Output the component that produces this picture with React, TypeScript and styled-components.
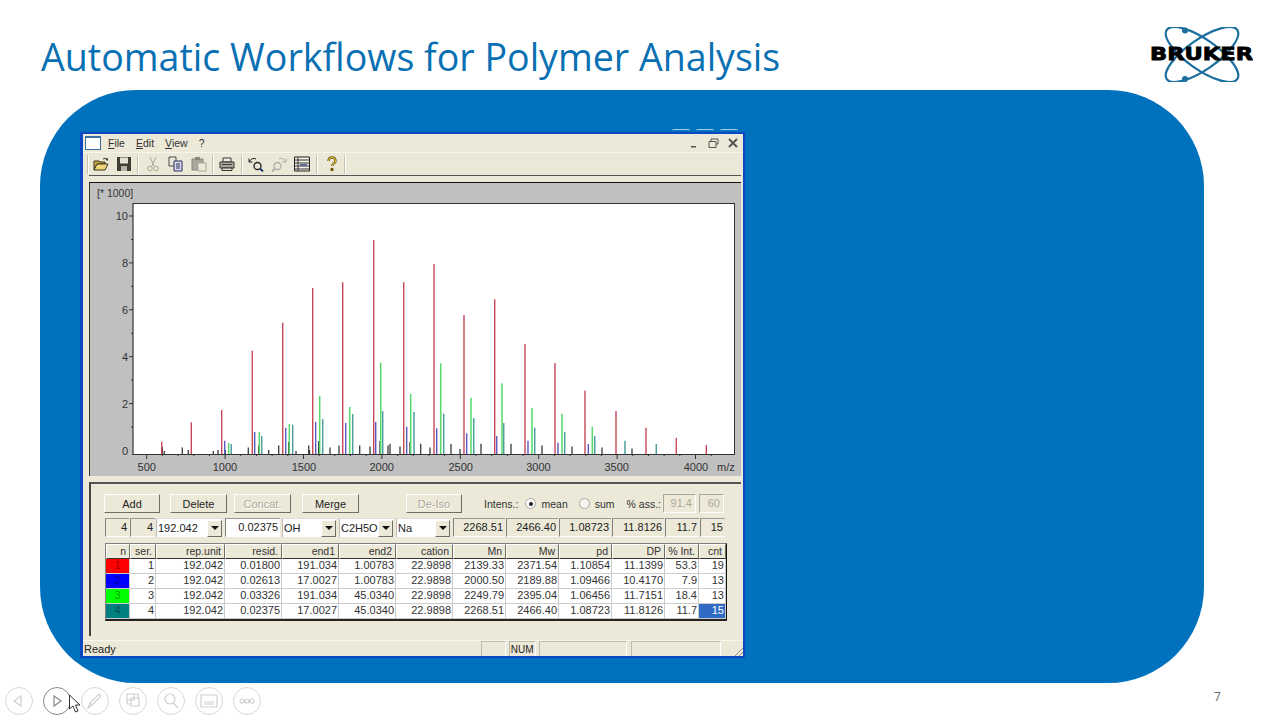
import React from "react";
import styled, { createGlobalStyle } from "styled-components";

const Global = createGlobalStyle`
  html, body { margin: 0; padding: 0; background: #fff; }
  #root { width: 1280px; height: 720px; overflow: hidden; }
`;

const Slide = styled.div`
  width: 1280px; height: 720px; display: flex; flex-direction: column;
  position: relative; background: #fff; font-family: "Liberation Sans", Arial, sans-serif;
`;
const Header = styled.header`
  height: 90px; box-sizing: border-box; padding: 27px 27px 0 41px;
  display: flex; justify-content: space-between; align-items: flex-start;
`;
const Title = styled.h1`
  margin: 0; font: 400 37.6px/60px "Open Sans", sans-serif; color: #0a70b4; white-space: nowrap;
`;
const Panel = styled.main`
  width: 1164px; height: 593px; margin-left: 40px; box-sizing: border-box;
  padding: 42px 0 0 40px; background: #0071bc; border-radius: 96px;
`;
const Win = styled.section`
  position: relative; width: 665px; height: 526px; box-sizing: border-box;
  border: 2px solid #0a48c4; border-left-width: 3px; background: #ece9d8;
  display: flex; flex-direction: column; font-size: 11px; color: #222;
`;
const GhostButtons = styled.div`
  position: absolute; top: -5px; right: 5px; display: flex; gap: 6px;
`;
const GhostButton = styled.span`
  width: 18px; height: 3px; border-top: 1px solid #a8cbe6; border-radius: 2px 2px 0 0;
`;
const MenuBar = styled.div`
  height: 19px; flex: none; display: flex; align-items: center; padding: 0 3px 0 2px;
  border-bottom: 1px solid #f8f6ec; box-sizing: border-box;
`;
const DocIcon = styled.span`
  width: 14px; height: 11px; background: #fff; border: 1px solid #3a6ea5; border-top-width: 2px;
  margin-right: 7px; flex: none;
`;
const MenuItem = styled.span`
  margin-right: 11px; font-size: 10.5px; color: #333;
  &::first-letter { text-decoration: underline; }
`;
const MdiButtons = styled.div`
  margin-left: auto; display: flex; gap: 4px; align-items: center;
`;
const MdiButton = styled.span`
  width: 15px; height: 15px; display: flex; align-items: center; justify-content: center;
`;
const Toolbar = styled.div`
  height: 22px; flex: none; display: flex; align-items: center; padding-left: 4px;
  box-sizing: border-box; position: relative; background: #ebe8d7;
`;
const ToolIcon = styled.span<{ $gap: number }>`
  width: 16px; height: 16px; flex: none; margin-right: ${p => p.$gap}px; display: block;
  svg { display: block; }
`;
const ToolSep = styled.span<{ $mr: number }>`
  width: 1px; height: 19px; background: #c4c1b0; border-right: 1px solid #fff; flex: none; margin-right: ${p => p.$mr}px;
`;
const Rule = styled.div`
  height: 1px; flex: none; margin: 0 2px 0 6px; background: #555;
`;
const ChartPane = styled.div`
  height: 294px; flex: none; margin: 6px 2px 0 6px; box-sizing: border-box; background: #c0c0c0;
  border-top: 1px solid #111; border-left: 1px solid #333; svg { display: block; }
`;
const LowerPane = styled.div`
  height: 154px; flex: none; margin: 6px 2px 0 6px; box-sizing: border-box;
  border-top: 2px solid #555; border-left: 2px solid #444; padding: 10px 0 0 13px;
`;
const ButtonRow = styled.div`
  height: 19px; display: flex; align-items: center;
`;
const Btn = styled.span<{ $w: number; $mr: number; $off?: boolean }>`
  width: ${p => p.$w}px; margin-right: ${p => p.$mr}px; height: 19px; box-sizing: border-box; flex: none;
  display: flex; align-items: center; justify-content: center; font-size: 11px;
  color: ${p => (p.$off ? "#aca899" : "#222")};
  text-shadow: ${p => (p.$off ? "1px 1px 0 #fff" : "none")};
  border: 1px solid; border-color: #fff #716f64 #716f64 #fff;
`;
const Label = styled.span<{ $mr?: number }>`
  margin-right: ${p => p.$mr ?? 0}px; flex: none; font-size: 10.5px; color: #333; white-space: nowrap;
`;
const Radio = styled.span<{ $on?: boolean }>`
  width: 11px; height: 11px; border-radius: 50%; background: ${p => (p.$on ? "#fff" : "#f6f5ee")};
  border: 1px solid #a9a89e; box-sizing: border-box; margin-right: 5px; flex: none; position: relative;
  &::after {
    content: ""; display: ${p => (p.$on ? "block" : "none")}; position: absolute;
    left: 2.5px; top: 2.5px; width: 4px; height: 4px; border-radius: 50%; background: #222;
  }
`;
const OffField = styled.span<{ $w: number; $mr?: number }>`
  width: ${p => p.$w}px; margin-right: ${p => p.$mr ?? 0}px; height: 19px; box-sizing: border-box; flex: none;
  border: 1px solid; border-color: #aca899 #fff #fff #aca899; color: #aca899; text-align: right;
  padding-right: 3px; line-height: 17px;
`;
const ParamRow = styled.div`
  height: 19px; margin: 5px 0 6px 1px; display: flex;
`;
const Field = styled.span<{ $w: number; $mr?: number; $white?: boolean }>`
  width: ${p => p.$w}px; margin-right: ${p => p.$mr ?? 1}px; height: 19px; box-sizing: border-box; flex: none;
  background: ${p => (p.$white ? "#fff" : "transparent")};
  border-left: 1px solid #808080; border-top: 1px solid #9a9a90; border-bottom: 1px solid #fff;
  text-align: right; padding-right: 2px; line-height: 17px; font-size: 11px;
`;
const Combo = styled.span<{ $w: number; $mr?: number }>`
  width: ${p => p.$w}px; margin-right: ${p => p.$mr ?? 3}px; height: 19px; box-sizing: border-box; flex: none;
  background: #fff; display: flex; align-items: center; justify-content: space-between;
  padding-left: 1px; border-left: 1px solid #bbb; border-top: 1px solid #ddd;
  font-size: 11px; white-space: nowrap; overflow: hidden;
`;
const ComboArrow = styled.span`
  width: 15px; height: 17px; flex: none; box-sizing: border-box; background: #ece9d8;
  border: 1px solid; border-color: #fff #716f64 #716f64 #fff;
  display: flex; align-items: center; justify-content: center;
  &::after {
    content: ""; border-left: 4px solid transparent; border-right: 4px solid transparent; border-top: 4px solid #111;
  }
`;
const COLS = "24px 26px 69px 57px 57px 57px 57px 53px 53px 53px 53px 34px 27px";
const Table = styled.div`
  width: 622px; margin-left: 1px; box-sizing: border-box; display: grid; grid-template-columns: ${COLS};
  border: 1px solid; border-color: #808080 #111 #222 #808080; border-bottom-width: 2px; background: #fff;
`;
const HeadCell = styled.span`
  height: 15px; box-sizing: border-box; background: #ece9d8; text-align: right; padding-right: 3px;
  line-height: 12px; font-size: 10.5px; color: #333; border-bottom: 1px solid #333;
  border-right: 1px solid #716f64; border-left: 1px solid #fff; border-top: 1px solid #fff;
`;
const Cell = styled.span<{ $sel?: boolean }>`
  height: 15px; box-sizing: border-box; text-align: right; padding-right: 1px; line-height: 13px;
  font-size: 11px; color: ${p => (p.$sel ? "#fff" : "#333")}; background: ${p => (p.$sel ? "#316ac5" : "#fff")};
  border-right: 1px solid #ccc; border-bottom: 1px solid #ccc;
`;
const KeyCell = styled.span<{ $c: string }>`
  height: 15px; box-sizing: border-box; text-align: center; line-height: 13px; font-size: 11px;
  color: rgba(0, 0, 0, 0.42); background: ${p => p.$c}; border-bottom: 1px solid #ccc; border-right: 1px solid #ccc;
`;
const StatusBar = styled.footer`
  height: 16px; flex: none; margin-top: 4px; display: flex; align-items: center; position: relative;
  padding-left: 1px; font-size: 11px; color: #222; border-top: 1px solid #f8f6ec; box-sizing: border-box;
`;
const StatusPanel = styled.span<{ $w: number; $ml: number }>`
  width: ${p => p.$w}px; margin-left: ${p => p.$ml}px; height: 15px; box-sizing: border-box; flex: none;
  border-left: 1px solid #bdbaa8; border-top: 1px solid #bdbaa8; border-right: 1px solid #fff;
  font-size: 10px; line-height: 15px; padding-left: 1px;
`;
const Grip = styled.span`
  position: absolute; right: 0; bottom: 0; width: 10px; height: 10px;
  background: repeating-linear-gradient(135deg, transparent 0 2px, #8f8d80 2px 3px);
  clip-path: polygon(100% 0, 100% 100%, 0 100%);
`;
const Foot = styled.div`
  height: 37px; display: flex; align-items: flex-start; padding: 4px 0 0 5px; box-sizing: border-box; gap: 10px;
`;
const NavBtn = styled.span<{ $dark?: boolean }>`
  width: 28px; height: 28px; flex: none; box-sizing: border-box; border-radius: 50%;
  border: 1px solid ${p => (p.$dark ? "#8a8a8a" : "#d8d8d8")};
  display: flex; align-items: center; justify-content: center; background: #fff;
`;
const PageNo = styled.span`
  position: absolute; left: 1214px; top: 688px; font: 12px "Open Sans", sans-serif; color: #666;
`;
const Cursor = styled.svg`
  position: absolute; left: 68px; top: 694px;
`;

const red: number[][] = [[161.7,441.7],[191.3,422.3],[221.7,410],[252.3,350.7],[282.7,322.7],[312.7,288],[342.7,282.3],[373.7,240],[403.7,282.3],[434,264],[464,315],[494.7,299.3],[525,344],[555,363],[585,390.7],[616,411],[646,427.7],[676.3,438],[706.3,445]];
const green: number[][] = [[228.7,443],[259.3,432],[289.3,424],[319.7,396],[349.7,407],[380.7,362.7],[410.7,394],[440.7,363.3],[471,397.7],[502,383.3],[532,408],[562,413.7],[592.3,426.7]];
const teal: number[][] = [[231.3,444],[261.7,436],[292.7,424.7],[322.7,419],[352.7,414],[382.7,411],[414,412],[443.7,413.7],[473.7,418],[503.7,423],[534.7,427.7],[564.7,432],[594.7,436],[625,440.7],[656.3,444]];
const blue: number[][] = [[224.7,440.7],[254.7,432],[285.7,427.7],[315.7,422],[345.7,423],[375.7,422],[406.7,426.7],[436.7,428.3],[466.7,433.3],[496.7,436],[528,440.7],[558,442.7],[588.3,444]];
const black: number[][] = [[162.3,447],[164.3,451],[182.3,447.5],[188.3,450],[213.3,451],[218,450],[225.3,450],[248.3,447.5],[258.7,445.5],[268.7,450],[278.7,445.5],[288.7,442],[296,451],[308.7,445.5],[309.5,450],[318.7,441],[330,447.5],[339,445.5],[359.7,445.5],[370,446.5],[380,441],[388,445.5],[390,443.7],[400,446.5],[410,442],[420.7,443.7],[430,447.5],[451,444],[460,449],[481,443.7],[511,443.7],[542,445.5],[572,446.5],[602,447.5],[632,448.5]];
const series: { pts: number[][]; color: string; w: number }[] = [
  { pts: black, color: "#3a3a3a", w: 1.3 },
  { pts: teal, color: "#4f9ea0", w: 1.5 },
  { pts: green, color: "#55d868", w: 1.5 },
  { pts: blue, color: "#5a5ac4", w: 1.4 },
  { pts: red, color: "#c84858", w: 1.4 },
];
const X0 = 90, Y0 = 183;
const xLabels: [string, number][] = [["500",146.7],["1000",225],["1500",304],["2000",381.7],["2500",460.7],["3000",538.5],["3500",616.7],["4000",696]];
const yLabels: [string, number][] = [["10",216],["8",263],["6",310],["4",357],["2",404],["0",450.5]];

const Chart = () => {
  const minor = Array.from({ length: 37 }, (_, i) => 146.7 + i * 15.68);
  const yt = Array.from({ length: 10 }, (_, i) => 216 + i * 23.45);
  return (
    <svg width="650" height="293" viewBox={`${X0} ${Y0} 650 293`}>
      <rect x="133" y="203" width="602" height="251" fill="#fff" />
      <path d="M133 203.5H735M734.5 203V454" stroke="#333" strokeWidth="1" fill="none" />
      <path d="M133 203V455M132 454.5H735" stroke="#333" strokeWidth="1.2" fill="none" />
      {series.map(s => s.pts.map(([x, y], i) => (
        <line key={s.color + i} x1={x} x2={x} y1={y} y2={454} stroke={s.color} strokeWidth={s.w} />
      )))}
      {minor.map((x, i) => (
        <line key={i} x1={x} x2={x} y1={454} y2={i % 5 === 0 ? 459 : 456} stroke="#333" strokeWidth="1" />
      ))}
      {yt.map((y, i) => (
        <line key={i} x1={i % 2 === 0 ? 129 : 131} x2={133} y1={y} y2={y} stroke="#333" strokeWidth="1" />
      ))}
      <g fontFamily="'Liberation Sans', Arial, sans-serif" fontSize="11" fill="#333">
        <text x="97" y="197" fontSize="10.5">[* 1000]</text>
        {xLabels.map(([t, x]) => <text key={t} x={x} y="471" textAnchor="middle">{t}</text>)}
        <text x="717" y="471">m/z</text>
        {yLabels.map(([t, y]) => <text key={t} x="128" y={y + 4} textAnchor="end">{t}</text>)}
      </g>
    </svg>
  );
};

const Logo = () => (
  <svg width="103" height="55" viewBox="0 0 103 55">
    <g fill="none" stroke="#1c6f9f" strokeWidth="2.2">
      <ellipse cx="52" cy="27.5" rx="43" ry="15" transform="rotate(35 52 27.5)" />
      <ellipse cx="52" cy="27.5" rx="43" ry="15" transform="rotate(-35 52 27.5)" />
    </g>
    <circle cx="35" cy="3.5" r="3" fill="#1c6f9f" />
    <circle cx="35" cy="52" r="3" fill="#1c6f9f" />
    <text x="0" y="33" fontFamily="'DejaVu Sans', sans-serif" fontWeight="700" fontSize="17"
      textLength="103" lengthAdjust="spacingAndGlyphs" fill="#000" stroke="#000" strokeWidth="0.8">BRUKER</text>
  </svg>
);

const I = ({ children }: { children: React.ReactNode }) => (
  <svg width="16" height="16" viewBox="0 0 16 16">{children}</svg>
);
const icons = {
  open: <I><path d="M1 5h5l1 1h5v2H4L1 14z" fill="#c8a83c" stroke="#3a3520" /><path d="M1 14l3-6h11l-3 6z" fill="#f0d878" stroke="#3a3520" /><path d="M10 3q3-2 5 1M15 4l-2-.2 1.6-1.6" fill="none" stroke="#333" /></I>,
  save: <I><path d="M1 1h14v14H1z" fill="#3e3e32" /><path d="M4 1.5h8v6H4z" fill="#e4e2d4" /><path d="M5 10h6v5H5z" fill="#b6b4a4" /></I>,
  cut: <I><path d="M5 1l4 9M11 1L7 10" stroke="#a9a79a" fill="none" /><circle cx="5" cy="12.5" r="2.3" fill="none" stroke="#a9a79a" /><circle cx="11" cy="12.5" r="2.3" fill="none" stroke="#a9a79a" /></I>,
  copy: <I><path d="M1 1h7v9H1z" fill="#e8e6da" stroke="#4a4a40" /><path d="M6 5h8v10H6z" fill="#d8dcea" stroke="#2c2c60" /><path d="M8 8h4M8 10h4M8 12h4" stroke="#2c2c60" /></I>,
  paste: <I><path d="M1 3h11v11H1z" fill="#a9a79a" stroke="#8b897c" /><path d="M4 1h5v3H4z" fill="#8b897c" /><path d="M7 7h8v8H7z" fill="#ecead9" stroke="#a9a79a" /></I>,
  print: <I><path d="M4 2h8v4H4z" fill="#f2f0e4" stroke="#333" /><path d="M1 6h14v6H1z" fill="#a8a698" stroke="#333" /><path d="M3 12h10v2.500H3z" fill="#e4e2d4" stroke="#333" /><path d="M3 8.500h10" stroke="#444" /></I>,
  undo: <I><circle cx="9.500" cy="10" r="3.500" fill="none" stroke="#222" strokeWidth="1.3" /><path d="M12 12.500l3 3" stroke="#1a3a6a" strokeWidth="2" /><path d="M1 6q3-5 7-3M1 2.500V6h3.500" fill="none" stroke="#222" /></I>,
  redo: <I><circle cx="6.500" cy="10" r="3.500" fill="none" stroke="#b0aea2" strokeWidth="1.3" /><path d="M4 12.500l-3 3" stroke="#b0aea2" strokeWidth="2" /><path d="M15 6q-3-5-7-3M15 2.500V6h-3.500" fill="none" stroke="#b0aea2" /></I>,
  list: <I><path d="M0.500 1h15v14H.5z" fill="#f4f2e8" stroke="#222" /><path d="M1 4h14M1 7h14M1 10h14M1 13h14M4 1v14" stroke="#333" /><path d="M6 8h7v2H6z" fill="#5a6a9a" /></I>,
  help: <I><path d="M4.500 5q0-3.500 3.500-3.500t3.500 3.500q0 2-2.200 3-1 .6-1 2" fill="none" stroke="#6a5a10" strokeWidth="2.400" /><path d="M4.500 5q0-3.500 3.500-3.500t3.500 3.500q0 2-2.200 3-1 .6-1 2" fill="none" stroke="#f0d040" strokeWidth="1" /><circle cx="8" cy="13.500" r="1.700" fill="#6a5a10" /></I>,
};

const header = ["n","ser.","rep.unit","resid.","end1","end2","cation","Mn","Mw","pd","DP","% Int.","cnt"];
const rows: { c: string; v: string[] }[] = [
  { c: "#ff0000", v: ["1","1","192.042","0.01800","191.034","1.00783","22.9898","2139.33","2371.54","1.10854","11.1399","53.3","19"] },
  { c: "#0000ff", v: ["2","2","192.042","0.02613","17.0027","1.00783","22.9898","2000.50","2189.88","1.09466","10.4170","7.9","13"] },
  { c: "#00ff00", v: ["3","3","192.042","0.03326","191.034","45.0340","22.9898","2249.79","2395.04","1.06456","11.7151","18.4","13"] },
  { c: "#008080", v: ["4","4","192.042","0.02375","17.0027","45.0340","22.9898","2268.51","2466.40","1.08723","11.8126","11.7","15"] },
];

const nav = [
  <path d="M15 8l-7 5 7 5z" />,
  <path d="M10 8l7 5-7 5z" />,
  <path d="M6 20l2-5 9-9 2 2-9 9zM8 15l2 2" />,
  <path d="M7 6h7v6H7zM11 10h8v8h-8zM7 12v4h4M14 6h4v4" />,
  <path d="M17 11a5 5 0 1 0-10 0a5 5 0 1 0 10 0M15 15l5 5" />,
  <path d="M5 7h16v12H5zM8 14h10M8 16h10" />,
  <path d="M6 13a2 2 0 1 0 4 0a2 2 0 1 0-4 0M11 13a2 2 0 1 0 4 0a2 2 0 1 0-4 0M16 13a2 2 0 1 0 4 0a2 2 0 1 0-4 0" />,
];

export default function App() {
  return (
    <Slide>
      <Global />
      <Header>
        <Title>Automatic Workflows for Polymer Analysis</Title>
        <Logo />
      </Header>
      <Panel>
        <Win>
          <GhostButtons><GhostButton /><GhostButton /><GhostButton /></GhostButtons>
          <MenuBar>
            <DocIcon />
            <MenuItem>File</MenuItem>
            <MenuItem>Edit</MenuItem>
            <MenuItem>View</MenuItem>
            <MenuItem>?</MenuItem>
            <MdiButtons>
              <MdiButton><svg width="9" height="9" viewBox="0 0 9 9"><path d="M1 7h5v1.500H1z" fill="#555" /></svg></MdiButton>
              <MdiButton><svg width="11" height="11" viewBox="0 0 11 11"><path d="M3 3V1h7v5H8M1 3.500h7v6H1z" fill="none" stroke="#555" /></svg></MdiButton>
              <MdiButton><svg width="10" height="10" viewBox="0 0 10 10"><path d="M1 1l8 8M9 1L1 9" stroke="#555" strokeWidth="2" /></svg></MdiButton>
            </MdiButtons>
          </MenuBar>
          <Toolbar>
            <ToolSep $mr={4} />
            <ToolIcon $gap={7}>{icons.open}</ToolIcon>
            <ToolIcon $gap={5}>{icons.save}</ToolIcon>
            <ToolSep $mr={6} />
            <ToolIcon $gap={7}>{icons.cut}</ToolIcon>
            <ToolIcon $gap={7}>{icons.copy}</ToolIcon>
            <ToolIcon $gap={5}>{icons.paste}</ToolIcon>
            <ToolSep $mr={5} />
            <ToolIcon $gap={6}>{icons.print}</ToolIcon>
            <ToolSep $mr={5} />
            <ToolIcon $gap={7}>{icons.undo}</ToolIcon>
            <ToolIcon $gap={7}>{icons.redo}</ToolIcon>
            <ToolIcon $gap={6}>{icons.list}</ToolIcon>
            <ToolSep $mr={6} />
            <ToolIcon $gap={4}>{icons.help}</ToolIcon>
            <ToolSep $mr={0} />
          </Toolbar>
          <Rule />
          <ChartPane><Chart /></ChartPane>
          <LowerPane>
            <ButtonRow>
              <Btn $w={56} $mr={10}>Add</Btn>
              <Btn $w={57} $mr={7}>Delete</Btn>
              <Btn $w={57} $mr={11} $off>Concat.</Btn>
              <Btn $w={57} $mr={47}>Merge</Btn>
              <Btn $w={56} $mr={22} $off>De-Iso</Btn>
              <Label $mr={7}>Intens.:</Label>
              <Radio $on />
              <Label $mr={11}>mean</Label>
              <Radio />
              <Label $mr={12}>sum</Label>
              <Label $mr={2}>% ass.:</Label>
              <OffField $w={33} $mr={3}>91.4</OffField>
              <OffField $w={25}>60</OffField>
            </ButtonRow>
            <ParamRow>
              <Field $w={24}>4</Field>
              <Field $w={25}>4</Field>
              <Combo $w={66}>192.042<ComboArrow /></Combo>
              <Field $w={55} $white $mr={2}>0.02375</Field>
              <Combo $w={54}>OH<ComboArrow /></Combo>
              <Combo $w={54}>C2H5O<ComboArrow /></Combo>
              <Combo $w={54}>Na<ComboArrow /></Combo>
              <Field $w={52}>2268.51</Field>
              <Field $w={52}>2466.40</Field>
              <Field $w={52}>1.08723</Field>
              <Field $w={52}>11.8126</Field>
              <Field $w={34}>11.7</Field>
              <Field $w={25}>15</Field>
            </ParamRow>
            <Table>
              {header.map(h => <HeadCell key={h}>{h}</HeadCell>)}
              {rows.map((r, ri) => r.v.map((v, i) =>
                i === 0
                  ? <KeyCell key={i + "-" + ri} $c={r.c}>{v}</KeyCell>
                  : <Cell key={i + "-" + ri} $sel={ri === 3 && i === 12}>{v}</Cell>
              ))}
            </Table>
          </LowerPane>
          <StatusBar>
            Ready
            <StatusPanel $w={25} $ml={365} />
            <StatusPanel $w={27} $ml={3}>NUM</StatusPanel>
            <StatusPanel $w={88} $ml={3} />
            <StatusPanel $w={90} $ml={4} />
            <Grip />
          </StatusBar>
        </Win>
      </Panel>
      <Foot>
        {nav.map((d, i) => (
          <NavBtn key={i} $dark={i === 1}>
            <svg width="26" height="26" viewBox="0 0 26 26" fill="none" stroke={i === 1 ? "#888" : "#d0d0d0"} strokeWidth="1.2">{d}</svg>
          </NavBtn>
        ))}
      </Foot>
      <PageNo>7</PageNo>
      <Cursor width="14" height="20" viewBox="0 0 14 20">
        <path d="M1.500 1v14l3.500-3 2.500 6 2.500-1-2.500-6h4.500z" fill="#fff" stroke="#333" strokeWidth="1" />
      </Cursor>
    </Slide>
  );
}
